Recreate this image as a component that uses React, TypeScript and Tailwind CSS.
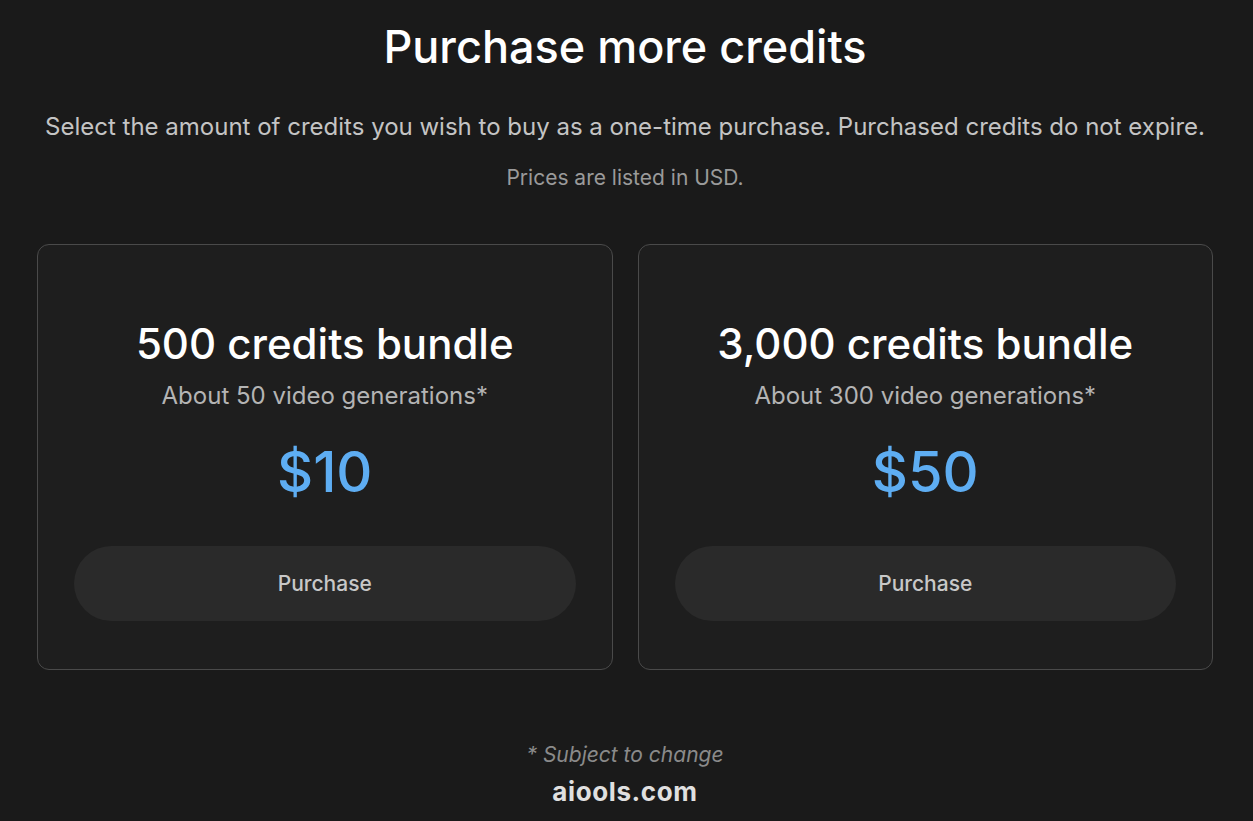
const bundles = [
  {credits: "500", gens: "50", price: "$10"},
  {credits: "3,000", gens: "300", price: "$50"},
];

const BundleCard = ({credits, gens, price}: {credits: string; gens: string; price: string}) => {
  return (
    <div className="flex flex-1 flex-col items-center rounded-[12px] border border-[#4a4a4a] bg-[#1e1e1e] px-9 pb-[48px] pt-[74px]">
      <h2 className="text-[42px] font-medium leading-[50px] text-white">{credits} credits bundle</h2>
      <p className="mt-[12px] text-[24px] leading-[30px] text-[#b4b4b4]">About {gens} video generations*</p>
      <div className="mt-[28px] text-[56px] font-medium leading-[67px] text-[#5eadf2]">{price}</div>
      <button className="mt-[40px] h-[75px] w-full rounded-full bg-[#2a2a2a] text-[21px] font-medium text-[#c8c8c8]">
        Purchase
      </button>
    </div>
  );
};

export default function App() {
  return (
    <div className="min-h-screen bg-[#1a1a1a] font-['Inter',sans-serif]">
      <div className="flex flex-col items-center pl-[37px] pr-[40px] pt-[20px]">
        <h1 className="text-[45px] font-medium leading-[54px] text-white">Purchase more credits</h1>
        <p className="mt-[38px] text-[24px] leading-[30px] text-[#c4c4c4]">
          Select the amount of credits you wish to buy as a one-time purchase. Purchased credits do not expire.
        </p>
        <p className="mt-[23px] text-[21px] leading-[26px] text-[#9a9a9a]">Prices are listed in USD.</p>
        <div className="mt-[53px] flex w-full gap-[25px]">
          {bundles.map((b) => (
            <BundleCard key={b.price} {...b} />
          ))}
        </div>
        <p className="mt-[72px] text-[21px] italic leading-[26px] text-[#8a8a8a]">* Subject to change</p>
        <p className="mt-[9px] text-[26px] font-bold leading-[30px] tracking-[0.6px] text-[#e0e0e0]">aiools.com</p>
      </div>
    </div>
  );
}
